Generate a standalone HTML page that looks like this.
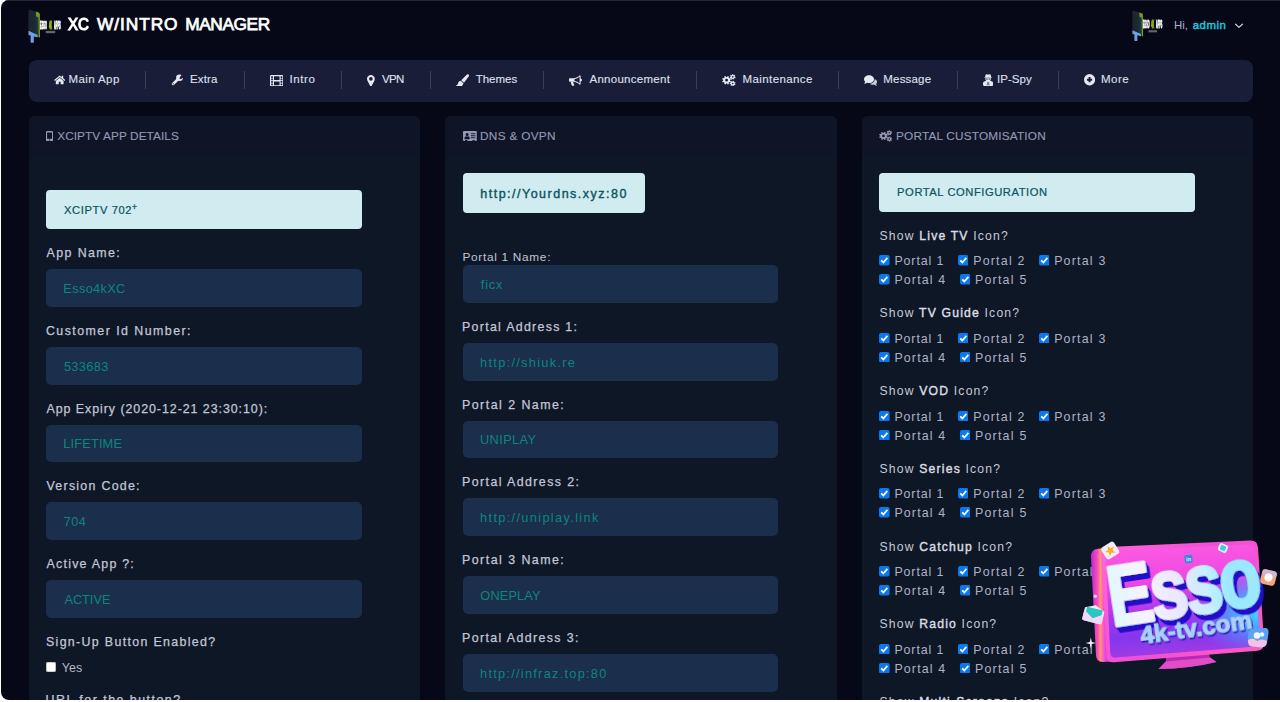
<!DOCTYPE html>
<html lang="en"><head><meta charset="utf-8"><title>XC W/INTRO MANAGER</title>
<style>
html,body{margin:0;padding:0;background:#fff;}
body{width:1280px;height:702px;overflow:hidden;position:relative;font-family:"Liberation Sans",sans-serif;}
#page{position:absolute;left:1px;top:0;width:1279px;height:700px;background:#060818;border-radius:8px 0 0 8px;overflow:hidden;}
#page:before{content:"";position:absolute;left:0;top:0;right:0;height:1px;background:#252736;}
#in{position:absolute;left:-1px;top:0;width:1280px;height:702px;}
.b{position:absolute;display:block;}
.t{position:absolute;white-space:nowrap;display:block;}
</style></head><body>
<div id="page"><div id="in">
<!--HEADER-->
<span class="t" style="left:0;top:16.00px;font-size:17.3px;line-height:17.3px;color:#fff;-webkit-text-stroke:0.75px #fff;"><span style="position:absolute;left:67.87px;top:0;transform:scaleX(0.870);transform-origin:0 0;-webkit-text-stroke-width:1.2px">XC</span> <span style="position:absolute;left:97.12px;top:0;letter-spacing:0.925px">W/INTRO</span> <span style="position:absolute;left:185.28px;top:0;letter-spacing:-0.408px">MANAGER</span></span>
<span id="t1" class="t " style="left:1174.00px;top:20.00px;font-size:11.4px;line-height:11.4px;color:#aeb2ca;">Hi,</span>
<span id="t2" class="t " style="left:1192.67px;top:20.00px;font-size:11.4px;line-height:11.4px;color:#25c5dc;-webkit-text-stroke:0.45px #25c5dc;letter-spacing:0.550px;">admin</span>
<svg class="b" style="left:1234px;top:21.5px" width="10" height="8" viewBox="0 0 10 8"><path d="M1.6 2.2 L5 5.4 L8.4 2.2" fill="none" stroke="#c9ccda" stroke-width="1.25" stroke-linecap="round" stroke-linejoin="round"/></svg>
<svg class="b" style="left:28.20px;top:9.30px;will-change:transform" width="34.00" height="34.00" viewBox="0 0 34 34">
<defs><linearGradient id="lga" x1="0" y1="0" x2="1" y2="0"><stop offset="0" stop-color="#1c2530"/><stop offset="0.55" stop-color="#1a2a33"/><stop offset="1" stop-color="#1c4650"/></linearGradient></defs>
<path d="M0.4 2.2 Q0.4 0.4 2.2 0.7 L10.400 3.400 Q11.800 3.900 11.800 5.400 L12 28.600 L0.400 23.600Z" fill="url(#lga)"/>
<path d="M7.800 2.600 L10.400 3.400 Q11.800 3.900 11.800 5.400 L12 28.600 L10.700 28.200 L10.500 8.300 L8.200 7.400Z" fill="#7f9619"/>
<path d="M0.500 21.800 L9.700 26 L9.700 28.300 L5.800 27.400 L5.800 33.400 Q4 34.300 2.600 33.400 L2.600 26.600 L0.500 26.100Z" fill="#6f9fe0"/>
<text transform="translate(12,20) scale(0.225,1)" font-family="Liberation Sans, sans-serif" font-weight="bold" font-size="11" word-spacing="6" fill="#ffffff" stroke="#ffffff" stroke-width="1.100">ESSO <tspan fill="#9cc016" stroke="#9cc016">4K</tspan> APPS</text>
<rect x="17.800" y="21.900" width="9.400" height="2.300" fill="#8e8f98" opacity="0.7"/>
</svg>
<svg class="b" style="left:1131.80px;top:10.20px;will-change:transform" width="31.40" height="31.40" viewBox="0 0 34 34">
<defs><linearGradient id="lgb" x1="0" y1="0" x2="1" y2="0"><stop offset="0" stop-color="#1c2530"/><stop offset="0.55" stop-color="#1a2a33"/><stop offset="1" stop-color="#1c4650"/></linearGradient></defs>
<path d="M0.4 2.2 Q0.4 0.4 2.2 0.7 L10.400 3.400 Q11.800 3.900 11.800 5.400 L12 28.600 L0.400 23.600Z" fill="url(#lgb)"/>
<path d="M7.800 2.600 L10.400 3.400 Q11.800 3.900 11.800 5.400 L12 28.600 L10.700 28.200 L10.500 8.300 L8.200 7.400Z" fill="#7f9619"/>
<path d="M0.500 21.800 L9.700 26 L9.700 28.300 L5.800 27.400 L5.800 33.400 Q4 34.300 2.600 33.400 L2.600 26.600 L0.500 26.100Z" fill="#6f9fe0"/>
<text transform="translate(12,20) scale(0.225,1)" font-family="Liberation Sans, sans-serif" font-weight="bold" font-size="11" word-spacing="6" fill="#ffffff" stroke="#ffffff" stroke-width="1.100">ESSO <tspan fill="#9cc016" stroke="#9cc016">4K</tspan> APPS</text>
<rect x="17.800" y="21.900" width="9.400" height="2.300" fill="#8e8f98" opacity="0.7"/>
</svg>
<div class="b" style="left:28.50px;top:59.50px;width:1224.50px;height:42.50px;background:#1a1d38;border-radius:8px;"></div>
<div class="b" style="left:144.75px;top:71.00px;width:1.00px;height:18.00px;background:#3a3e5a;border-radius:0px;"></div>
<div class="b" style="left:243.75px;top:71.00px;width:1.00px;height:18.00px;background:#3a3e5a;border-radius:0px;"></div>
<div class="b" style="left:340.75px;top:71.00px;width:1.00px;height:18.00px;background:#3a3e5a;border-radius:0px;"></div>
<div class="b" style="left:429.75px;top:71.00px;width:1.00px;height:18.00px;background:#3a3e5a;border-radius:0px;"></div>
<div class="b" style="left:543.25px;top:71.00px;width:1.00px;height:18.00px;background:#3a3e5a;border-radius:0px;"></div>
<div class="b" style="left:696.00px;top:71.00px;width:1.00px;height:18.00px;background:#3a3e5a;border-radius:0px;"></div>
<div class="b" style="left:838.00px;top:71.00px;width:1.00px;height:18.00px;background:#3a3e5a;border-radius:0px;"></div>
<div class="b" style="left:956.50px;top:71.00px;width:1.00px;height:18.00px;background:#3a3e5a;border-radius:0px;"></div>
<div class="b" style="left:1057.75px;top:71.00px;width:1.00px;height:18.00px;background:#3a3e5a;border-radius:0px;"></div>
<span id="t3" class="t " style="left:68.56px;top:74.00px;font-size:11.5px;line-height:11.5px;color:#dde0ec;-webkit-text-stroke:0.12px #dde0ec;letter-spacing:0.397px;">Main App</span>
<span id="t4" class="t " style="left:190.06px;top:74.00px;font-size:11.5px;line-height:11.5px;color:#dde0ec;-webkit-text-stroke:0.12px #dde0ec;letter-spacing:0.107px;">Extra</span>
<span id="t5" class="t " style="left:289.41px;top:74.00px;font-size:11.5px;line-height:11.5px;color:#dde0ec;-webkit-text-stroke:0.12px #dde0ec;letter-spacing:0.595px;">Intro</span>
<span id="t6" class="t " style="left:381.91px;top:74.00px;font-size:11.5px;line-height:11.5px;color:#dde0ec;-webkit-text-stroke:0.12px #dde0ec;letter-spacing:-0.660px;">VPN</span>
<span id="t7" class="t " style="left:475.71px;top:74.00px;font-size:11.5px;line-height:11.5px;color:#dde0ec;-webkit-text-stroke:0.12px #dde0ec;letter-spacing:-0.004px;">Themes</span>
<span id="t8" class="t " style="left:589.46px;top:74.00px;font-size:11.5px;line-height:11.5px;color:#dde0ec;-webkit-text-stroke:0.12px #dde0ec;letter-spacing:0.280px;">Announcement</span>
<span id="t9" class="t " style="left:742.56px;top:74.00px;font-size:11.5px;line-height:11.5px;color:#dde0ec;-webkit-text-stroke:0.12px #dde0ec;letter-spacing:0.393px;">Maintenance</span>
<span id="t10" class="t " style="left:883.31px;top:74.00px;font-size:11.5px;line-height:11.5px;color:#dde0ec;-webkit-text-stroke:0.12px #dde0ec;letter-spacing:0.188px;">Message</span>
<span id="t11" class="t " style="left:996.91px;top:74.00px;font-size:11.5px;line-height:11.5px;color:#dde0ec;-webkit-text-stroke:0.12px #dde0ec;letter-spacing:0.086px;">IP-Spy</span>
<span id="t12" class="t " style="left:1101.06px;top:74.00px;font-size:11.5px;line-height:11.5px;color:#dde0ec;-webkit-text-stroke:0.12px #dde0ec;letter-spacing:0.443px;">More</span>
<svg class="b" style="left:53.60px;top:75.30px" width="11.40" height="9.50" viewBox="0 0 24 20" preserveAspectRatio="none"><path fill="#e6e9f2" d="M12 0.8 L0.3 10.6 L1.9 12.4 L12 4 L22.1 12.4 L23.7 10.6 L19.4 7 V1.8 H16.4 V4.5 Z"/><path fill="#e6e9f2" d="M12 5.6 L3.8 12.4 V19.6 H10 V14 H14 V19.6 H20.2 V12.4 Z"/></svg>
<svg class="b" style="left:171.20px;top:74.40px" width="12.30" height="12.00" viewBox="0 0 24 24" preserveAspectRatio="none"><path d="M4 20 L14.5 9.5" stroke="#e6e9f2" stroke-width="5" stroke-linecap="round" fill="none"/><circle cx="16.6" cy="7.4" r="6.6" fill="#e6e9f2"/><path d="M16.2 8.4 L21 1 L26 6 L19 10.6Z" fill="#1a1d38"/><circle cx="4.2" cy="19.8" r="1.2" fill="#1a1d38"/></svg>
<svg class="b" style="left:269.80px;top:74.90px" width="13.50" height="11.60" viewBox="0 0 28 24" preserveAspectRatio="none"><rect x="0" y="0" width="28" height="24" rx="2.6" fill="#e6e9f2"/><rect x="2.4" y="2.6" width="3.6" height="3.6" rx="0.6" fill="#1a1d38"/><rect x="22" y="2.6" width="3.6" height="3.6" rx="0.6" fill="#1a1d38"/><rect x="2.4" y="7.4" width="3.6" height="3.6" rx="0.6" fill="#1a1d38"/><rect x="22" y="7.4" width="3.6" height="3.6" rx="0.6" fill="#1a1d38"/><rect x="2.4" y="12.6" width="3.6" height="3.6" rx="0.6" fill="#1a1d38"/><rect x="22" y="12.6" width="3.6" height="3.6" rx="0.6" fill="#1a1d38"/><rect x="2.4" y="17.4" width="3.6" height="3.6" rx="0.6" fill="#1a1d38"/><rect x="22" y="17.4" width="3.6" height="3.6" rx="0.6" fill="#1a1d38"/><rect x="8.2" y="2.6" width="11.6" height="8" rx="0.8" fill="#1a1d38"/><rect x="8.2" y="13.2" width="11.6" height="8" rx="0.8" fill="#1a1d38"/></svg>
<svg class="b" style="left:366.80px;top:74.70px" width="7.80" height="11.40" viewBox="0 0 16 23" preserveAspectRatio="none"><path fill="#e6e9f2" d="M8 0 C3.6 0 0 3.5 0 7.8 C0 9.6 0.6 11 1.4 12.4 L6.6 22 C7.2 23.2 8.8 23.2 9.4 22 L14.6 12.4 C15.4 11 16 9.6 16 7.8 C16 3.5 12.4 0 8 0Z"/><circle cx="8" cy="7.8" r="3.7" fill="#1a1d38"/></svg>
<svg class="b" style="left:455.70px;top:73.60px" width="13.10" height="12.80" viewBox="0 0 24 24" preserveAspectRatio="none"><path fill="#e6e9f2" d="M22.8 0.7 C24.2 1.8 24.2 3.6 23.2 4.9 L14.6 16.2 L9.6 11.6 L19.6 1.3 C20.5 0.3 21.9 0 22.8 0.700Z"/><path fill="#e6e9f2" d="M8.600 12.800 L13.400 17.200 C13.600 21 10.400 24 5.800 24 C3 24 0.800 22.800 0 21.200 C2.600 20.800 3.400 19.400 3.800 17.400 C4.300 14.600 6.400 12.800 8.600 12.800Z"/></svg>
<svg class="b" style="left:569.20px;top:75.00px" width="13.10" height="11.00" viewBox="0 0 26 22" preserveAspectRatio="none"><path fill="#e6e9f2" d="M2.2 6.4 H8.5 C13.5 6.4 18.5 3.6 21.4 0.4 C22.3 0.2 23 0.8 23 1.8 V7 C24.6 7.2 25.8 8.4 25.8 10 C25.8 11.600 24.6 12.8 23 13 V18.200 C23 19.2 22.3 19.8 21.4 19.6 C18.5 16.4 13.500 13.6 8.5 13.6 H2.2 C1 13.6 0 12.6 0 11.400 V8.6 C0 7.4 1 6.4 2.2 6.400Z"/><path fill="#1a1d38" d="M21 3.6 V16.4 C18.4 14.1 14.8 12.4 11 11.800 V8.2 C14.8 7.6 18.400 5.9 21 3.600Z"/><path fill="#e6e9f2" d="M3.600 13.600 H8.6 C8.2 16 9.2 18.4 11 20.2 C10.200 21.900 7.6 22.300 6 21.2 C4.6 18.900 3.600 16.500 3.600 13.600Z"/></svg>
<svg class="b" style="left:722.20px;top:74.00px" width="13.70" height="12.40" viewBox="0 0 25 24" preserveAspectRatio="none"><path fill="#e6e9f2" fill-rule="evenodd" d="M14.63 12.97 L16.57 13.94 L15.57 16.37 L13.51 15.69 L12.12 17.09 L12.81 19.15 L10.38 20.16 L9.40 18.22 L7.43 18.23 L6.46 20.17 L4.03 19.17 L4.71 17.11 L3.31 15.72 L1.25 16.41 L0.24 13.98 L2.18 13.00 L2.17 11.03 L0.23 10.06 L1.23 7.63 L3.29 8.31 L4.68 6.91 L3.99 4.85 L6.42 3.84 L7.40 5.78 L9.37 5.77 L10.34 3.83 L12.77 4.83 L12.09 6.89 L13.49 8.28 L15.55 7.59 L16.56 10.02 L14.62 11.00Z M5.80 12.00 a2.60 2.60 0 1 0 5.20 0 a2.60 2.60 0 1 0 -5.20 0Z M23.49 5.33 L25.00 5.71 L24.62 7.60 L23.08 7.36 L22.24 8.47 L22.88 9.89 L21.16 10.77 L20.39 9.42 L19.00 9.45 L18.29 10.84 L16.53 10.04 L17.11 8.60 L16.21 7.53 L14.69 7.84 L14.21 5.97 L15.70 5.52 L15.98 4.16 L14.78 3.16 L15.95 1.62 L17.23 2.50 L18.47 1.87 L18.51 0.31 L20.43 0.26 L20.55 1.82 L21.81 2.39 L23.05 1.45 L24.29 2.93 L23.15 3.98Z M18.10 5.60 a1.50 1.50 0 1 0 3.00 0 a1.50 1.50 0 1 0 -3.00 0Z M23.40 19.29 L24.73 20.10 L23.80 21.79 L22.40 21.11 L21.27 21.92 L21.47 23.47 L19.57 23.80 L19.23 22.28 L17.89 21.90 L16.80 23.02 L15.36 21.74 L16.33 20.53 L15.79 19.24 L14.24 19.09 L14.34 17.17 L15.90 17.17 L16.57 15.95 L15.72 14.64 L17.29 13.52 L18.25 14.74 L19.62 14.50 L20.12 13.02 L21.97 13.55 L21.62 15.06 L22.66 15.99 L24.13 15.45 L24.87 17.23 L23.47 17.90Z M18.10 18.40 a1.50 1.50 0 1 0 3.00 0 a1.50 1.50 0 1 0 -3.00 0Z"/></svg>
<svg class="b" style="left:864.20px;top:75.10px" width="13.10" height="10.80" viewBox="0 0 26 22" preserveAspectRatio="none"><path fill="#e6e9f2" opacity="0.85" d="M21 8.2 C24 9.300 26 11.400 26 14 C26 15.600 25.2 17 24 18.100 C24.4 19.400 25.1 20.600 26 21.600 C24 21.500 22.2 20.800 20.800 19.700 C19.900 19.900 19 20 18 20 C15.4 20 13.100 19.100 11.600 17.700 C17 17.300 21.200 13.700 21.200 9.300 C21.200 8.900 21.100 8.600 21 8.200Z"/><path fill="#e6e9f2" d="M10 0.600 C4.500 0.600 0 4.200 0 8.600 C0 10.600 0.900 12.400 2.400 13.800 C2 15.300 1.100 16.700 0 17.800 C2.400 17.700 4.600 16.900 6.200 15.700 C7.400 16.100 8.700 16.300 10 16.300 C15.500 16.300 20 12.900 20 8.600 C20 4.200 15.500 0.600 10 0.600Z"/></svg>
<svg class="b" style="left:982.80px;top:73.70px" width="10.30" height="12.00" viewBox="0 0 20 24" preserveAspectRatio="none"><path fill="#e6e9f2" d="M5.600 0.800 C6.400 0.200 7.200 1 8 1 H12 C12.800 1 13.600 0.200 14.400 0.800 C15.200 1.400 15.600 4.200 16 6.400 H17.600 V7.600 H2.400 V6.400 H4 C4.400 4.200 4.800 1.400 5.600 0.800Z"/><path fill="#e6e9f2" d="M4.400 8.400 H15.600 C15.600 11 14.800 12.600 13.800 13.400 L17.600 14.800 C19 15.400 20 16.800 20 18.400 V21.600 C20 22.900 19 24 17.600 24 H2.400 C1 24 0 22.900 0 21.600 V18.400 C0 16.800 1 15.400 2.400 14.800 L6.200 13.400 C5.200 12.600 4.400 11 4.400 8.400Z"/><path fill="#1a1d38" d="M5.600 9.400 H9.200 V10.800 C9.200 11.600 8.400 12 7.400 12 C6.400 12 5.600 11.400 5.600 10.400Z M10.800 9.400 H14.400 V10.400 C14.400 11.400 13.600 12 12.600 12 C11.600 12 10.800 11.600 10.800 10.800Z" opacity="0.55"/><path fill="#1a1d38" d="M8.400 15 L10 16.400 L11.600 15 L13 22.400 H7Z" opacity="0.5"/></svg>
<svg class="b" style="left:1083.70px;top:74.30px" width="11.10" height="11.40" viewBox="0 0 24 24" preserveAspectRatio="none"><circle cx="12" cy="12" r="12" fill="#e6e9f2"/><path d="M12 6.400 V17.600 M6.400 12 H17.600" stroke="#1a1d38" stroke-width="4.2" stroke-linecap="butt"/></svg>
<div class="b" style="left:28.50px;top:116.00px;width:391.50px;height:600.00px;background:#0e1726;border-radius:6px;"></div>
<div class="b" style="left:28.50px;top:116.00px;width:391.50px;height:39.20px;background:#0f1526;border-radius:6px;border-bottom-left-radius:0;border-bottom-right-radius:0;"></div>
<div class="b" style="left:28.50px;top:155.00px;width:391.50px;height:1.00px;background:#0d1423;border-radius:0px;"></div>
<div class="b" style="left:445.00px;top:116.00px;width:391.50px;height:600.00px;background:#0e1726;border-radius:6px;"></div>
<div class="b" style="left:445.00px;top:116.00px;width:391.50px;height:39.20px;background:#0f1526;border-radius:6px;border-bottom-left-radius:0;border-bottom-right-radius:0;"></div>
<div class="b" style="left:445.00px;top:155.00px;width:391.50px;height:1.00px;background:#0d1423;border-radius:0px;"></div>
<div class="b" style="left:861.50px;top:116.00px;width:391.50px;height:600.00px;background:#0e1726;border-radius:6px;"></div>
<div class="b" style="left:861.50px;top:116.00px;width:391.50px;height:39.20px;background:#0f1526;border-radius:6px;border-bottom-left-radius:0;border-bottom-right-radius:0;"></div>
<div class="b" style="left:861.50px;top:155.00px;width:391.50px;height:1.00px;background:#0d1423;border-radius:0px;"></div>
<span id="t13" class="t " style="left:57.21px;top:131.00px;font-size:11.8px;line-height:11.8px;color:#9499b5;-webkit-text-stroke:0.12px #9499b5;letter-spacing:0.084px;">XCIPTV APP DETAILS</span>
<span id="t14" class="t " style="left:480.01px;top:131.00px;font-size:11.8px;line-height:11.8px;color:#9499b5;-webkit-text-stroke:0.12px #9499b5;letter-spacing:0.303px;">DNS &amp; OVPN</span>
<span id="t15" class="t " style="left:896.01px;top:131.00px;font-size:11.8px;line-height:11.8px;color:#9499b5;-webkit-text-stroke:0.12px #9499b5;letter-spacing:0.186px;">PORTAL CUSTOMISATION</span>
<svg class="b" style="left:45.90px;top:130.80px" width="7.10" height="10.40" viewBox="0 0 14 22" preserveAspectRatio="none"><rect x="0" y="0" width="14" height="22" rx="2.800" fill="#9499b5"/><rect x="2.200" y="3.200" width="9.600" height="13.400" fill="#0f1526"/><circle cx="7" cy="19.200" r="1.300" fill="#0f1526"/></svg>
<svg class="b" style="left:463.00px;top:131.00px" width="13.80" height="10.00" viewBox="0 0 28 20" preserveAspectRatio="none"><rect x="0" y="0" width="28" height="20" rx="2" fill="#9499b5"/><path fill="#0f1526" d="M3 15.200 C3 12 4.600 10.600 6 10.400 C6.800 11 7.600 11.200 8.400 11.200 C9.200 11.200 10 11 10.800 10.400 C12.200 10.600 13.800 12 13.800 15.200 C13.800 16 13.200 16.400 12.600 16.400 H4.200 C3.600 16.400 3 16 3 15.200Z"/><circle cx="8.400" cy="7.200" r="3" fill="#0f1526"/><rect x="16" y="4.600" width="9" height="1.800" fill="#0f1526"/><rect x="16" y="8.600" width="9" height="1.800" fill="#0f1526"/><rect x="16" y="12.600" width="9" height="1.800" fill="#0f1526"/><rect x="4" y="18.200" width="5" height="1.800" fill="#0f1526"/><rect x="19" y="18.200" width="5" height="1.800" fill="#0f1526"/></svg>
<svg class="b" style="left:879.40px;top:130.20px" width="13.20" height="11.80" viewBox="0 0 25 24" preserveAspectRatio="none"><path fill="#9499b5" fill-rule="evenodd" d="M14.63 12.97 L16.57 13.94 L15.57 16.37 L13.51 15.69 L12.12 17.09 L12.81 19.15 L10.38 20.16 L9.40 18.22 L7.43 18.23 L6.46 20.17 L4.03 19.17 L4.71 17.11 L3.31 15.72 L1.25 16.41 L0.24 13.98 L2.18 13.00 L2.17 11.03 L0.23 10.06 L1.23 7.63 L3.29 8.31 L4.68 6.91 L3.99 4.85 L6.42 3.84 L7.40 5.78 L9.37 5.77 L10.34 3.83 L12.77 4.83 L12.09 6.89 L13.49 8.28 L15.55 7.59 L16.56 10.02 L14.62 11.00Z M5.80 12.00 a2.60 2.60 0 1 0 5.20 0 a2.60 2.60 0 1 0 -5.20 0Z M23.49 5.33 L25.00 5.71 L24.62 7.60 L23.08 7.36 L22.24 8.47 L22.88 9.89 L21.16 10.77 L20.39 9.42 L19.00 9.45 L18.29 10.84 L16.53 10.04 L17.11 8.60 L16.21 7.53 L14.69 7.84 L14.21 5.97 L15.70 5.52 L15.98 4.16 L14.78 3.16 L15.95 1.62 L17.23 2.50 L18.47 1.87 L18.51 0.31 L20.43 0.26 L20.55 1.82 L21.81 2.39 L23.05 1.45 L24.29 2.93 L23.15 3.98Z M18.10 5.60 a1.50 1.50 0 1 0 3.00 0 a1.50 1.50 0 1 0 -3.00 0Z M23.40 19.29 L24.73 20.10 L23.80 21.79 L22.40 21.11 L21.27 21.92 L21.47 23.47 L19.57 23.80 L19.23 22.28 L17.89 21.90 L16.80 23.02 L15.36 21.74 L16.33 20.53 L15.79 19.24 L14.24 19.09 L14.34 17.17 L15.90 17.17 L16.57 15.95 L15.72 14.64 L17.29 13.52 L18.25 14.74 L19.62 14.50 L20.12 13.02 L21.97 13.55 L21.62 15.06 L22.66 15.99 L24.13 15.45 L24.87 17.23 L23.47 17.90Z M18.10 18.40 a1.50 1.50 0 1 0 3.00 0 a1.50 1.50 0 1 0 -3.00 0Z"/></svg>
<div class="b" style="left:46.00px;top:190.00px;width:316.00px;height:39.00px;background:#d1ecf1;border-radius:4px;"></div>
<span id="t16" class="t " style="left:64.06px;top:205.00px;font-size:11.2px;line-height:11.2px;color:#0c5460;-webkit-text-stroke:0.22px #0c5460;letter-spacing:0.592px;">XCIPTV 702</span>
<span id="t17" class="t " style="left:131.90px;top:203.00px;font-size:8.5px;line-height:8.5px;color:#0c5460;-webkit-text-stroke:0.3px #0c5460;">+</span>
<span id="t18" class="t " style="left:46.52px;top:247.00px;font-size:12.4px;line-height:12.4px;color:#c3c6d6;-webkit-text-stroke:0.25px #c3c6d6;letter-spacing:1.412px;">App Name:</span>
<div class="b" style="left:46.00px;top:269.00px;width:315.60px;height:37.80px;background:#1b2e4b;border-radius:5px;"></div>
<span id="t19" class="t " style="left:63.35px;top:283.00px;font-size:12.8px;line-height:12.8px;color:#0c867c;letter-spacing:0.321px;">Esso4kXC</span>
<span id="t20" class="t " style="left:45.92px;top:325.00px;font-size:12.4px;line-height:12.4px;color:#c3c6d6;-webkit-text-stroke:0.25px #c3c6d6;letter-spacing:1.453px;">Customer Id Number:</span>
<div class="b" style="left:46.00px;top:346.75px;width:315.60px;height:37.80px;background:#1b2e4b;border-radius:5px;"></div>
<span id="t21" class="t " style="left:63.90px;top:361.00px;font-size:12.8px;line-height:12.8px;color:#0c867c;letter-spacing:0.360px;">533683</span>
<span id="t22" class="t " style="left:46.52px;top:403.00px;font-size:12.4px;line-height:12.4px;color:#c3c6d6;-webkit-text-stroke:0.25px #c3c6d6;letter-spacing:0.956px;">App Expiry (2020-12-21 23:30:10):</span>
<div class="b" style="left:46.00px;top:424.50px;width:315.60px;height:37.80px;background:#1b2e4b;border-radius:5px;"></div>
<span id="t23" class="t " style="left:63.35px;top:438.00px;font-size:12.8px;line-height:12.8px;color:#0c867c;letter-spacing:0.143px;">LIFETIME</span>
<span id="t24" class="t " style="left:46.48px;top:480.00px;font-size:12.4px;line-height:12.4px;color:#c3c6d6;-webkit-text-stroke:0.25px #c3c6d6;letter-spacing:1.271px;">Version Code:</span>
<div class="b" style="left:46.00px;top:502.25px;width:315.60px;height:37.80px;background:#1b2e4b;border-radius:5px;"></div>
<span id="t25" class="t " style="left:63.75px;top:516.00px;font-size:12.8px;line-height:12.8px;color:#0c867c;letter-spacing:0.325px;">704</span>
<span id="t26" class="t " style="left:46.52px;top:558.00px;font-size:12.4px;line-height:12.4px;color:#c3c6d6;-webkit-text-stroke:0.25px #c3c6d6;letter-spacing:1.246px;">Active App ?:</span>
<div class="b" style="left:46.00px;top:580.00px;width:315.60px;height:37.80px;background:#1b2e4b;border-radius:5px;"></div>
<span id="t27" class="t " style="left:64.40px;top:594.00px;font-size:12.8px;line-height:12.8px;color:#0c867c;letter-spacing:-0.040px;">ACTIVE</span>
<span id="t28" class="t " style="left:45.98px;top:636.00px;font-size:12.4px;line-height:12.4px;color:#c3c6d6;-webkit-text-stroke:0.25px #c3c6d6;letter-spacing:1.332px;">Sign-Up Button Enabled?</span>
<div class="b" style="left:46.00px;top:661.70px;width:10.00px;height:10.00px;background:#ffffff;border-radius:2px;box-shadow:inset 0 0 0 0.6px #9a9a9a;"></div>
<span id="t29" class="t " style="left:61.65px;top:662.00px;font-size:12.4px;line-height:12.4px;color:#b6b9c9;letter-spacing:0.200px;">Yes</span>
<span id="t30" class="t " style="left:45.58px;top:694.00px;font-size:12.4px;line-height:12.4px;color:#c3c6d6;-webkit-text-stroke:0.25px #c3c6d6;letter-spacing:1.494px;">URL for the button?</span>
<div class="b" style="left:462.50px;top:172.50px;width:182.50px;height:40.50px;background:#d1ecf1;border-radius:4px;"></div>
<span id="t31" class="t " style="left:480.25px;top:188.00px;font-size:12.5px;line-height:12.5px;color:#0c5460;-webkit-text-stroke:0.4px #0c5460;letter-spacing:1.495px;">http://Yourdns.xyz:80</span>
<span id="t32" class="t " style="left:462.45px;top:252.00px;font-size:11.8px;line-height:11.8px;color:#c2c5d3;letter-spacing:0.715px;">Portal 1 Name:</span>
<div class="b" style="left:462.50px;top:265.00px;width:315.60px;height:37.80px;background:#1b2e4b;border-radius:5px;"></div>
<span id="t33" class="t " style="left:480.75px;top:279.00px;font-size:12.8px;line-height:12.8px;color:#0c867c;letter-spacing:0.850px;">ficx</span>
<span id="t34" class="t " style="left:462.02px;top:321.00px;font-size:12.4px;line-height:12.4px;color:#c3c6d6;-webkit-text-stroke:0.25px #c3c6d6;letter-spacing:1.288px;">Portal Address 1:</span>
<div class="b" style="left:462.50px;top:342.75px;width:315.60px;height:37.80px;background:#1b2e4b;border-radius:5px;"></div>
<span id="t35" class="t " style="left:480.05px;top:357.00px;font-size:12.8px;line-height:12.8px;color:#0c867c;letter-spacing:1.293px;">http://shiuk.re</span>
<span id="t36" class="t " style="left:462.02px;top:399.00px;font-size:12.4px;line-height:12.4px;color:#c3c6d6;-webkit-text-stroke:0.25px #c3c6d6;letter-spacing:1.473px;">Portal 2 Name:</span>
<div class="b" style="left:462.50px;top:420.50px;width:315.60px;height:37.80px;background:#1b2e4b;border-radius:5px;"></div>
<span id="t37" class="t " style="left:479.95px;top:434.00px;font-size:12.8px;line-height:12.8px;color:#0c867c;letter-spacing:0.392px;">UNIPLAY</span>
<span id="t38" class="t " style="left:462.02px;top:476.00px;font-size:12.4px;line-height:12.4px;color:#c3c6d6;-webkit-text-stroke:0.25px #c3c6d6;letter-spacing:1.413px;">Portal Address 2:</span>
<div class="b" style="left:462.50px;top:498.25px;width:315.60px;height:37.80px;background:#1b2e4b;border-radius:5px;"></div>
<span id="t39" class="t " style="left:480.05px;top:512.00px;font-size:12.8px;line-height:12.8px;color:#0c867c;letter-spacing:1.328px;">http://uniplay.link</span>
<span id="t40" class="t " style="left:462.02px;top:554.00px;font-size:12.4px;line-height:12.4px;color:#c3c6d6;-webkit-text-stroke:0.25px #c3c6d6;letter-spacing:1.473px;">Portal 3 Name:</span>
<div class="b" style="left:462.50px;top:576.00px;width:315.60px;height:37.80px;background:#1b2e4b;border-radius:5px;"></div>
<span id="t41" class="t " style="left:480.30px;top:590.00px;font-size:12.8px;line-height:12.8px;color:#0c867c;letter-spacing:0.133px;">ONEPLAY</span>
<span id="t42" class="t " style="left:462.02px;top:632.00px;font-size:12.4px;line-height:12.4px;color:#c3c6d6;-webkit-text-stroke:0.25px #c3c6d6;letter-spacing:1.381px;">Portal Address 3:</span>
<div class="b" style="left:462.50px;top:653.75px;width:315.60px;height:37.80px;background:#1b2e4b;border-radius:5px;"></div>
<span id="t43" class="t " style="left:480.05px;top:668.00px;font-size:12.8px;line-height:12.8px;color:#0c867c;letter-spacing:1.255px;">http://infraz.top:80</span>
<div class="b" style="left:879.00px;top:172.50px;width:316.00px;height:39.00px;background:#d1ecf1;border-radius:4px;"></div>
<span id="t44" class="t " style="left:897.11px;top:187.00px;font-size:11.2px;line-height:11.2px;color:#0c5460;-webkit-text-stroke:0.22px #0c5460;letter-spacing:0.552px;">PORTAL CONFIGURATION</span>
<span id="t45" class="t" style="left:879.5px;top:230.00px;font-size:12.2px;line-height:12.2px;color:#c6c9d6;letter-spacing:1.18px;">Show <span style="color:#dcdde3;-webkit-text-stroke:0.4px #dcdde3">Live TV</span> Icon?</span>
<svg class="b" style="left:879.10px;top:255.00px" width="10.6" height="10.6" viewBox="0 0 21 21"><rect width="21" height="21" rx="4" fill="#0a78f0"/><path d="M4.4 10.6 L8.6 14.8 L16.6 5.6" fill="none" stroke="#fff" stroke-width="3.4"/></svg>
<span id="t46" class="t " style="left:894.40px;top:255.00px;font-size:12.4px;line-height:12.4px;color:#aeb2c6;letter-spacing:0.907px;">Portal 1</span>
<svg class="b" style="left:957.60px;top:255.00px" width="10.6" height="10.6" viewBox="0 0 21 21"><rect width="21" height="21" rx="4" fill="#0a78f0"/><path d="M4.4 10.6 L8.6 14.8 L16.6 5.6" fill="none" stroke="#fff" stroke-width="3.4"/></svg>
<span id="t47" class="t " style="left:973.15px;top:255.00px;font-size:12.4px;line-height:12.4px;color:#aeb2c6;letter-spacing:1.229px;">Portal 2</span>
<svg class="b" style="left:1038.60px;top:255.00px" width="10.6" height="10.6" viewBox="0 0 21 21"><rect width="21" height="21" rx="4" fill="#0a78f0"/><path d="M4.4 10.6 L8.6 14.8 L16.6 5.6" fill="none" stroke="#fff" stroke-width="3.4"/></svg>
<span id="t48" class="t " style="left:1054.15px;top:255.00px;font-size:12.4px;line-height:12.4px;color:#aeb2c6;letter-spacing:1.214px;">Portal 3</span>
<svg class="b" style="left:879.10px;top:274.00px" width="10.6" height="10.6" viewBox="0 0 21 21"><rect width="21" height="21" rx="4" fill="#0a78f0"/><path d="M4.4 10.6 L8.6 14.8 L16.6 5.6" fill="none" stroke="#fff" stroke-width="3.4"/></svg>
<span id="t49" class="t " style="left:894.40px;top:274.00px;font-size:12.4px;line-height:12.4px;color:#aeb2c6;letter-spacing:1.157px;">Portal 4</span>
<svg class="b" style="left:959.60px;top:274.00px" width="10.6" height="10.6" viewBox="0 0 21 21"><rect width="21" height="21" rx="4" fill="#0a78f0"/><path d="M4.4 10.6 L8.6 14.8 L16.6 5.6" fill="none" stroke="#fff" stroke-width="3.4"/></svg>
<span id="t50" class="t " style="left:974.90px;top:274.00px;font-size:12.4px;line-height:12.4px;color:#aeb2c6;letter-spacing:1.250px;">Portal 5</span>
<span id="t51" class="t" style="left:879.5px;top:307.00px;font-size:12.2px;line-height:12.2px;color:#c6c9d6;letter-spacing:1.18px;">Show <span style="color:#dcdde3;-webkit-text-stroke:0.4px #dcdde3">TV Guide</span> Icon?</span>
<svg class="b" style="left:879.10px;top:332.75px" width="10.6" height="10.6" viewBox="0 0 21 21"><rect width="21" height="21" rx="4" fill="#0a78f0"/><path d="M4.4 10.6 L8.6 14.8 L16.6 5.6" fill="none" stroke="#fff" stroke-width="3.4"/></svg>
<span id="t52" class="t " style="left:894.40px;top:333.00px;font-size:12.4px;line-height:12.4px;color:#aeb2c6;letter-spacing:0.907px;">Portal 1</span>
<svg class="b" style="left:957.60px;top:332.75px" width="10.6" height="10.6" viewBox="0 0 21 21"><rect width="21" height="21" rx="4" fill="#0a78f0"/><path d="M4.4 10.6 L8.6 14.8 L16.6 5.6" fill="none" stroke="#fff" stroke-width="3.4"/></svg>
<span id="t53" class="t " style="left:973.15px;top:333.00px;font-size:12.4px;line-height:12.4px;color:#aeb2c6;letter-spacing:1.229px;">Portal 2</span>
<svg class="b" style="left:1038.60px;top:332.75px" width="10.6" height="10.6" viewBox="0 0 21 21"><rect width="21" height="21" rx="4" fill="#0a78f0"/><path d="M4.4 10.6 L8.6 14.8 L16.6 5.6" fill="none" stroke="#fff" stroke-width="3.4"/></svg>
<span id="t54" class="t " style="left:1054.15px;top:333.00px;font-size:12.4px;line-height:12.4px;color:#aeb2c6;letter-spacing:1.214px;">Portal 3</span>
<svg class="b" style="left:879.10px;top:351.75px" width="10.6" height="10.6" viewBox="0 0 21 21"><rect width="21" height="21" rx="4" fill="#0a78f0"/><path d="M4.4 10.6 L8.6 14.8 L16.6 5.6" fill="none" stroke="#fff" stroke-width="3.4"/></svg>
<span id="t55" class="t " style="left:894.40px;top:352.00px;font-size:12.4px;line-height:12.4px;color:#aeb2c6;letter-spacing:1.157px;">Portal 4</span>
<svg class="b" style="left:959.60px;top:351.75px" width="10.6" height="10.6" viewBox="0 0 21 21"><rect width="21" height="21" rx="4" fill="#0a78f0"/><path d="M4.4 10.6 L8.6 14.8 L16.6 5.6" fill="none" stroke="#fff" stroke-width="3.4"/></svg>
<span id="t56" class="t " style="left:974.90px;top:352.00px;font-size:12.4px;line-height:12.4px;color:#aeb2c6;letter-spacing:1.250px;">Portal 5</span>
<span id="t57" class="t" style="left:879.5px;top:385.00px;font-size:12.2px;line-height:12.2px;color:#c6c9d6;letter-spacing:1.18px;">Show <span style="color:#dcdde3;-webkit-text-stroke:0.4px #dcdde3">VOD</span> Icon?</span>
<svg class="b" style="left:879.10px;top:410.50px" width="10.6" height="10.6" viewBox="0 0 21 21"><rect width="21" height="21" rx="4" fill="#0a78f0"/><path d="M4.4 10.6 L8.6 14.8 L16.6 5.6" fill="none" stroke="#fff" stroke-width="3.4"/></svg>
<span id="t58" class="t " style="left:894.40px;top:411.00px;font-size:12.4px;line-height:12.4px;color:#aeb2c6;letter-spacing:0.907px;">Portal 1</span>
<svg class="b" style="left:957.60px;top:410.50px" width="10.6" height="10.6" viewBox="0 0 21 21"><rect width="21" height="21" rx="4" fill="#0a78f0"/><path d="M4.4 10.6 L8.6 14.8 L16.6 5.6" fill="none" stroke="#fff" stroke-width="3.4"/></svg>
<span id="t59" class="t " style="left:973.15px;top:411.00px;font-size:12.4px;line-height:12.4px;color:#aeb2c6;letter-spacing:1.229px;">Portal 2</span>
<svg class="b" style="left:1038.60px;top:410.50px" width="10.6" height="10.6" viewBox="0 0 21 21"><rect width="21" height="21" rx="4" fill="#0a78f0"/><path d="M4.4 10.6 L8.6 14.8 L16.6 5.6" fill="none" stroke="#fff" stroke-width="3.4"/></svg>
<span id="t60" class="t " style="left:1054.15px;top:411.00px;font-size:12.4px;line-height:12.4px;color:#aeb2c6;letter-spacing:1.214px;">Portal 3</span>
<svg class="b" style="left:879.10px;top:429.50px" width="10.6" height="10.6" viewBox="0 0 21 21"><rect width="21" height="21" rx="4" fill="#0a78f0"/><path d="M4.4 10.6 L8.6 14.8 L16.6 5.6" fill="none" stroke="#fff" stroke-width="3.4"/></svg>
<span id="t61" class="t " style="left:894.40px;top:430.00px;font-size:12.4px;line-height:12.4px;color:#aeb2c6;letter-spacing:1.157px;">Portal 4</span>
<svg class="b" style="left:959.60px;top:429.50px" width="10.6" height="10.6" viewBox="0 0 21 21"><rect width="21" height="21" rx="4" fill="#0a78f0"/><path d="M4.4 10.6 L8.6 14.8 L16.6 5.6" fill="none" stroke="#fff" stroke-width="3.4"/></svg>
<span id="t62" class="t " style="left:974.90px;top:430.00px;font-size:12.4px;line-height:12.4px;color:#aeb2c6;letter-spacing:1.250px;">Portal 5</span>
<span id="t63" class="t" style="left:879.5px;top:463.00px;font-size:12.2px;line-height:12.2px;color:#c6c9d6;letter-spacing:1.18px;">Show <span style="color:#dcdde3;-webkit-text-stroke:0.4px #dcdde3">Series</span> Icon?</span>
<svg class="b" style="left:879.10px;top:488.25px" width="10.6" height="10.6" viewBox="0 0 21 21"><rect width="21" height="21" rx="4" fill="#0a78f0"/><path d="M4.4 10.6 L8.6 14.8 L16.6 5.6" fill="none" stroke="#fff" stroke-width="3.4"/></svg>
<span id="t64" class="t " style="left:894.40px;top:488.00px;font-size:12.4px;line-height:12.4px;color:#aeb2c6;letter-spacing:0.907px;">Portal 1</span>
<svg class="b" style="left:957.60px;top:488.25px" width="10.6" height="10.6" viewBox="0 0 21 21"><rect width="21" height="21" rx="4" fill="#0a78f0"/><path d="M4.4 10.6 L8.6 14.8 L16.6 5.6" fill="none" stroke="#fff" stroke-width="3.4"/></svg>
<span id="t65" class="t " style="left:973.15px;top:488.00px;font-size:12.4px;line-height:12.4px;color:#aeb2c6;letter-spacing:1.229px;">Portal 2</span>
<svg class="b" style="left:1038.60px;top:488.25px" width="10.6" height="10.6" viewBox="0 0 21 21"><rect width="21" height="21" rx="4" fill="#0a78f0"/><path d="M4.4 10.6 L8.6 14.8 L16.6 5.6" fill="none" stroke="#fff" stroke-width="3.4"/></svg>
<span id="t66" class="t " style="left:1054.15px;top:488.00px;font-size:12.4px;line-height:12.4px;color:#aeb2c6;letter-spacing:1.214px;">Portal 3</span>
<svg class="b" style="left:879.10px;top:507.25px" width="10.6" height="10.6" viewBox="0 0 21 21"><rect width="21" height="21" rx="4" fill="#0a78f0"/><path d="M4.4 10.6 L8.6 14.8 L16.6 5.6" fill="none" stroke="#fff" stroke-width="3.4"/></svg>
<span id="t67" class="t " style="left:894.40px;top:507.00px;font-size:12.4px;line-height:12.4px;color:#aeb2c6;letter-spacing:1.157px;">Portal 4</span>
<svg class="b" style="left:959.60px;top:507.25px" width="10.6" height="10.6" viewBox="0 0 21 21"><rect width="21" height="21" rx="4" fill="#0a78f0"/><path d="M4.4 10.6 L8.6 14.8 L16.6 5.6" fill="none" stroke="#fff" stroke-width="3.4"/></svg>
<span id="t68" class="t " style="left:974.90px;top:507.00px;font-size:12.4px;line-height:12.4px;color:#aeb2c6;letter-spacing:1.250px;">Portal 5</span>
<span id="t69" class="t" style="left:879.5px;top:541.00px;font-size:12.2px;line-height:12.2px;color:#c6c9d6;letter-spacing:1.18px;">Show <span style="color:#dcdde3;-webkit-text-stroke:0.4px #dcdde3">Catchup</span> Icon?</span>
<svg class="b" style="left:879.10px;top:566.00px" width="10.6" height="10.6" viewBox="0 0 21 21"><rect width="21" height="21" rx="4" fill="#0a78f0"/><path d="M4.4 10.6 L8.6 14.8 L16.6 5.6" fill="none" stroke="#fff" stroke-width="3.4"/></svg>
<span id="t70" class="t " style="left:894.40px;top:566.00px;font-size:12.4px;line-height:12.4px;color:#aeb2c6;letter-spacing:0.907px;">Portal 1</span>
<svg class="b" style="left:957.60px;top:566.00px" width="10.6" height="10.6" viewBox="0 0 21 21"><rect width="21" height="21" rx="4" fill="#0a78f0"/><path d="M4.4 10.6 L8.6 14.8 L16.6 5.6" fill="none" stroke="#fff" stroke-width="3.4"/></svg>
<span id="t71" class="t " style="left:973.15px;top:566.00px;font-size:12.4px;line-height:12.4px;color:#aeb2c6;letter-spacing:1.229px;">Portal 2</span>
<svg class="b" style="left:1038.60px;top:566.00px" width="10.6" height="10.6" viewBox="0 0 21 21"><rect width="21" height="21" rx="4" fill="#0a78f0"/><path d="M4.4 10.6 L8.6 14.8 L16.6 5.6" fill="none" stroke="#fff" stroke-width="3.4"/></svg>
<span id="t72" class="t " style="left:1054.15px;top:566.00px;font-size:12.4px;line-height:12.4px;color:#aeb2c6;letter-spacing:1.214px;">Portal 3</span>
<svg class="b" style="left:879.10px;top:585.00px" width="10.6" height="10.6" viewBox="0 0 21 21"><rect width="21" height="21" rx="4" fill="#0a78f0"/><path d="M4.4 10.6 L8.6 14.8 L16.6 5.6" fill="none" stroke="#fff" stroke-width="3.4"/></svg>
<span id="t73" class="t " style="left:894.40px;top:585.00px;font-size:12.4px;line-height:12.4px;color:#aeb2c6;letter-spacing:1.157px;">Portal 4</span>
<svg class="b" style="left:959.60px;top:585.00px" width="10.6" height="10.6" viewBox="0 0 21 21"><rect width="21" height="21" rx="4" fill="#0a78f0"/><path d="M4.4 10.6 L8.6 14.8 L16.6 5.6" fill="none" stroke="#fff" stroke-width="3.4"/></svg>
<span id="t74" class="t " style="left:974.90px;top:585.00px;font-size:12.4px;line-height:12.4px;color:#aeb2c6;letter-spacing:1.250px;">Portal 5</span>
<span id="t75" class="t" style="left:879.5px;top:618.00px;font-size:12.2px;line-height:12.2px;color:#c6c9d6;letter-spacing:1.18px;">Show <span style="color:#dcdde3;-webkit-text-stroke:0.4px #dcdde3">Radio</span> Icon?</span>
<svg class="b" style="left:879.10px;top:643.75px" width="10.6" height="10.6" viewBox="0 0 21 21"><rect width="21" height="21" rx="4" fill="#0a78f0"/><path d="M4.4 10.6 L8.6 14.8 L16.6 5.6" fill="none" stroke="#fff" stroke-width="3.4"/></svg>
<span id="t76" class="t " style="left:894.40px;top:644.00px;font-size:12.4px;line-height:12.4px;color:#aeb2c6;letter-spacing:0.907px;">Portal 1</span>
<svg class="b" style="left:957.60px;top:643.75px" width="10.6" height="10.6" viewBox="0 0 21 21"><rect width="21" height="21" rx="4" fill="#0a78f0"/><path d="M4.4 10.6 L8.6 14.8 L16.6 5.6" fill="none" stroke="#fff" stroke-width="3.4"/></svg>
<span id="t77" class="t " style="left:973.15px;top:644.00px;font-size:12.4px;line-height:12.4px;color:#aeb2c6;letter-spacing:1.229px;">Portal 2</span>
<svg class="b" style="left:1038.60px;top:643.75px" width="10.6" height="10.6" viewBox="0 0 21 21"><rect width="21" height="21" rx="4" fill="#0a78f0"/><path d="M4.4 10.6 L8.6 14.8 L16.6 5.6" fill="none" stroke="#fff" stroke-width="3.4"/></svg>
<span id="t78" class="t " style="left:1054.15px;top:644.00px;font-size:12.4px;line-height:12.4px;color:#aeb2c6;letter-spacing:1.214px;">Portal 3</span>
<svg class="b" style="left:879.10px;top:662.75px" width="10.6" height="10.6" viewBox="0 0 21 21"><rect width="21" height="21" rx="4" fill="#0a78f0"/><path d="M4.4 10.6 L8.6 14.8 L16.6 5.6" fill="none" stroke="#fff" stroke-width="3.4"/></svg>
<span id="t79" class="t " style="left:894.40px;top:663.00px;font-size:12.4px;line-height:12.4px;color:#aeb2c6;letter-spacing:1.157px;">Portal 4</span>
<svg class="b" style="left:959.60px;top:662.75px" width="10.6" height="10.6" viewBox="0 0 21 21"><rect width="21" height="21" rx="4" fill="#0a78f0"/><path d="M4.4 10.6 L8.6 14.8 L16.6 5.6" fill="none" stroke="#fff" stroke-width="3.4"/></svg>
<span id="t80" class="t " style="left:974.90px;top:663.00px;font-size:12.4px;line-height:12.4px;color:#aeb2c6;letter-spacing:1.250px;">Portal 5</span>
<span id="t81" class="t" style="left:879.5px;top:696.00px;font-size:12.2px;line-height:12.2px;color:#c6c9d6;letter-spacing:1.18px;">Show <span style="color:#dcdde3;-webkit-text-stroke:0.4px #dcdde3">Multi-Screens</span> Icon?</span>
<svg class="b" style="left:1075px;top:530px" width="205" height="150" viewBox="1075 530 205 150">
<defs>
<linearGradient id="wmf" gradientUnits="userSpaceOnUse" x1="1110" y1="545" x2="1255" y2="655"><stop offset="0" stop-color="#ff66d8"/><stop offset="0.45" stop-color="#f04fd8"/><stop offset="1" stop-color="#ff58c0"/></linearGradient>
<linearGradient id="wms" gradientUnits="userSpaceOnUse" x1="1180" y1="548" x2="1187" y2="655"><stop offset="0" stop-color="#fa58e2"/><stop offset="0.28" stop-color="#ee48e2"/><stop offset="0.55" stop-color="#b23aea"/><stop offset="0.8" stop-color="#8436ee"/><stop offset="1" stop-color="#a03ce4"/></linearGradient>
<radialGradient id="wmc" gradientUnits="userSpaceOnUse" cx="1262" cy="612" r="72" gradientTransform="translate(1262 612) scale(1 0.62) translate(-1262 -612)"><stop offset="0" stop-color="#40dcff" stop-opacity="1"/><stop offset="0.4" stop-color="#3cb8ff" stop-opacity="0.8"/><stop offset="1" stop-color="#4a80ff" stop-opacity="0"/></radialGradient>
<linearGradient id="wmside" gradientUnits="userSpaceOnUse" x1="1091" y1="0" x2="1106" y2="0"><stop offset="0" stop-color="#b42ad8"/><stop offset="0.45" stop-color="#ff4fb8"/><stop offset="0.62" stop-color="#ff9a70"/><stop offset="0.8" stop-color="#ff5fc0"/><stop offset="1" stop-color="#e040e0"/></linearGradient>
<linearGradient id="wmt" gradientUnits="userSpaceOnUse" x1="0" y1="0" x2="155" y2="0"><stop offset="0" stop-color="#dff8ff"/><stop offset="0.3" stop-color="#f6f2ff"/><stop offset="0.62" stop-color="#e6e6ff"/><stop offset="0.82" stop-color="#c4f0ff"/><stop offset="1" stop-color="#9be8ff"/></linearGradient>
<linearGradient id="wmt2" gradientUnits="userSpaceOnUse" x1="0" y1="-58" x2="0" y2="0"><stop offset="0" stop-color="#ffffff" stop-opacity="0.35"/><stop offset="1" stop-color="#7fdcff" stop-opacity="0.35"/></linearGradient>
<filter id="wmex" x="-5%" y="-10%" width="115%" height="130%"><feOffset in="SourceAlpha" dx="1.300" dy="2" result="o1"/><feOffset in="SourceAlpha" dx="2.600" dy="4" result="o2"/><feOffset in="SourceAlpha" dx="3.900" dy="6" result="o3"/><feMerge result="m"><feMergeNode in="o3"/><feMergeNode in="o2"/><feMergeNode in="o1"/></feMerge><feFlood flood-color="#2408c8"/><feComposite in2="m" operator="in" result="sh"/><feMerge><feMergeNode in="sh"/><feMergeNode in="SourceGraphic"/></feMerge></filter>
<filter id="wmex2" x="-5%" y="-10%" width="115%" height="140%"><feOffset in="SourceAlpha" dx="0.700" dy="1" result="o1"/><feOffset in="SourceAlpha" dx="1.400" dy="2" result="o2"/><feMerge result="m"><feMergeNode in="o2"/><feMergeNode in="o1"/></feMerge><feFlood flood-color="#3020b8"/><feComposite in2="m" operator="in" result="sh"/><feMerge><feMergeNode in="sh"/><feMergeNode in="SourceGraphic"/></feMerge></filter>
</defs>
<path d="M1166 655 L1208 650 L1210 657.500 L1216.500 662 Q1190 668.500 1158.500 669 L1166 661Z" fill="#b52ab8"/>
<path d="M1166 661.500 L1210 657.500 L1216.500 662 Q1190 668.500 1158.500 669Z" fill="#e24cc6"/>
<path d="M1091 557 Q1090.500 549.500 1098 548.800 L1106 548 L1112 661.500 L1103 662 Q1096.500 662.300 1096 655.500Z" fill="url(#wmside)"/>
<path d="M1101.500 554 Q1101.200 547.300 1108 546.900 L1250 540.500 Q1257.500 540.200 1258 547.500 L1264 643 Q1264.500 650 1257.500 650.800 L1114 662.300 Q1107 662.800 1106.600 656Z" fill="url(#wmf)"/>
<path d="M1105.500 556 Q1105.200 551 1110 550.700 L1249 544.400 Q1254 544.200 1254.400 549 L1260 641 Q1260.300 646 1255.500 646.500 L1116 657.600 Q1110.600 658 1110.300 653Z" fill="url(#wms)"/>
<path d="M1105.500 556 Q1105.200 551 1110 550.700 L1249 544.400 Q1254 544.200 1254.400 549 L1260 641 Q1260.300 646 1255.500 646.500 L1116 657.600 Q1110.600 658 1110.300 653Z" fill="url(#wmc)"/>
<g transform="translate(1112,626.500) rotate(-8.600) scale(0.79,1)" font-family="Liberation Sans, sans-serif" font-weight="bold" font-size="86" stroke-linejoin="round">
<text x="0" y="0" fill="url(#wmt)" stroke="url(#wmt)" stroke-width="3" letter-spacing="-3.5" filter="url(#wmex)">Esso</text>
</g>
<g transform="translate(1141.500,644) rotate(-8.200)" font-family="Liberation Sans, sans-serif" font-weight="bold" font-size="24.500" stroke-linejoin="round">
<text x="0" y="0" fill="#a9d0ff" stroke="#a9d0ff" stroke-width="1" filter="url(#wmex2)">4k-tv.com</text>
</g>
<g transform="translate(1110.200,550.500) rotate(-32)"><rect x="-7.500" y="-7" width="15" height="14" rx="3" fill="#f1ecfb"/><path d="M0 -5 L1.500 -1.600 L5.200 -1.400 L2.300 1 L3.300 4.600 L0 2.600 L-3.300 4.600 L-2.300 1 L-5.200 -1.400 L-1.500 -1.600Z" fill="#ffb01f"/></g>
<rect x="1184.500" y="555" width="8" height="8" rx="1.600" fill="#3a86e8" transform="rotate(-6 1188.500 559)"/><text transform="translate(1186.200,561.300) rotate(-6)" font-family="Liberation Sans, sans-serif" font-weight="bold" font-size="5.500" fill="#e8f2ff">in</text>
<g transform="translate(1223,548) rotate(25)"><rect x="-4.500" y="-4" width="9" height="8" rx="1.800" fill="#dff6ff"/><rect x="-2.800" y="-2.500" width="5.600" height="5" rx="1" fill="#45c8f0"/></g>
<g transform="translate(1268.500,577.500) rotate(14)"><rect x="-7.500" y="-7.500" width="15" height="15" rx="4" fill="#f6a27a"/><rect x="-7.500" y="-7.500" width="15" height="6" rx="3" fill="#c9b8e8" opacity="0.8"/><circle cx="0" cy="0" r="4" fill="#fff"/></g>
<g transform="translate(1093.500,614.500) rotate(14)"><path d="M-10 -5 L0 -9.500 L10 -5 L10 6 Q10 8 8 8 L-8 8 Q-10 8 -10 6Z" fill="#f3e6fb"/><path d="M-8 -6 L8 -6 L8 -1 L0 4 L-8 -1Z" fill="#2bc6c0"/><path d="M-10 -2.500 L0 4 L10 -2.500 L10 6 Q10 8 8 8 L-8 8 Q-10 8 -10 6Z" fill="#f0d9f6"/></g>
<g transform="translate(1258,638)"><path d="M-10 -5 Q-10 -9 -5 -9.500 L7 -10 Q11 -10 10.500 -5 L9 5 Q8 9 3 9.500 L-6 8.500 Q-10 8 -10 3Z" fill="#5aa2f2"/><circle cx="-1" cy="-2.500" r="3.300" fill="#f2f6ff"/><circle cx="4" cy="-3.500" r="2.200" fill="#f2f6ff"/><path d="M-10 2 Q-5 -1.500 -1 3 Q4 0 9 3 L8.500 5.500 Q8 9 3 9.500 L-6 8.500 Q-10 8 -10 3Z" fill="#f3c2e6"/></g>
<path d="M1090.800 637.500 L1091.800 642 L1096 643 L1091.800 644 L1090.800 648.500 L1089.800 644 L1085.600 643 L1089.800 642Z" fill="#f4ecff"/>
<circle cx="1095.300" cy="596.300" r="1.700" fill="#cfd6ff"/>
</svg>
</div></div>
</body></html>
